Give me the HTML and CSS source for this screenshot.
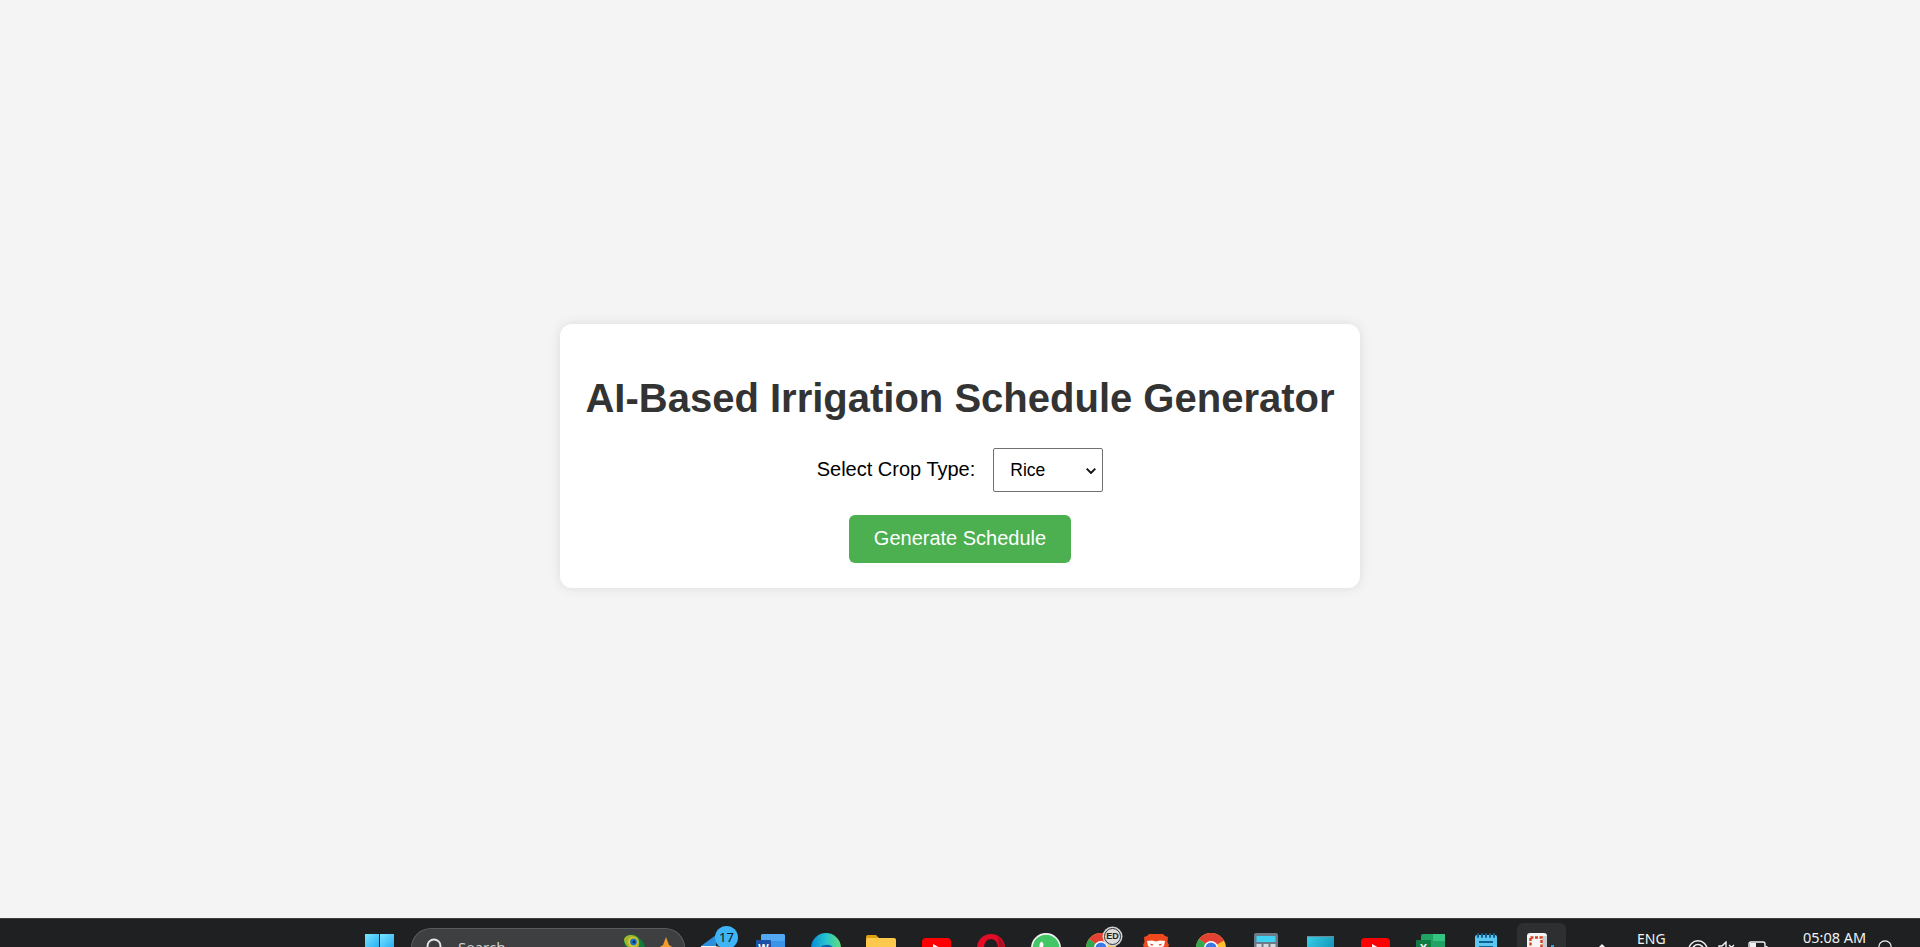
FILE: index.html
```html
<!DOCTYPE html>
<html lang="en">
<head>
<meta charset="utf-8">
<title>AI-Based Irrigation Schedule Generator</title>
<link rel="stylesheet" href="styles.css">
</head>
<body>
<main class="page">
  <section class="card">
    <h1 class="title">AI-Based Irrigation Schedule Generator</h1>
    <div class="field">
      <label class="field-label" for="crop">Select Crop Type:</label>
      <div class="select-wrap">
        <select class="field-select" id="crop"><option>Rice</option><option>Wheat</option><option>Corn</option></select>
        <svg class="select-chevron" viewBox="0 0 10 6"><path d="M.7.7L5 5l4.300-4.300" fill="none" stroke="#111" stroke-width="1.900"/></svg>
      </div>
    </div>
    <button class="generate" type="button"><span class="generate-label">Generate Schedule</span></button>
  </section>
</main>
<footer class="taskbar">
  <div class="tile tile-start">
    <svg class="ico" viewBox="0 0 30 30"><defs><linearGradient id="win" x1="0" y1="0" x2="1" y2="1"><stop offset="0" stop-color="#79e6ff"/><stop offset="1" stop-color="#27aef2"/></linearGradient></defs><rect x="0" y="1" width="14" height="14" fill="url(#win)"/><rect x="15" y="1" width="14" height="14" fill="url(#win)"/><rect x="0" y="16" width="14" height="14" fill="url(#win)"/><rect x="15" y="16" width="14" height="14" fill="url(#win)"/></svg>
  </div>
  <div class="search">
    <svg class="search-icon" viewBox="0 0 20 20"><circle cx="9" cy="8" r="6.500" fill="none" stroke="#e4e4e4" stroke-width="2"/><path d="M14 13l5 5" stroke="#e4e4e4" stroke-width="2"/></svg>
    <span class="search-text">Search</span>
    <svg class="peacock" viewBox="0 0 24 24"><path d="M1 5C3 0 11-1 15 3c5 4 8 9 7 15l-9 4C6 20 0 12 1 5z" fill="#0f7d3c"/><path d="M1 5C3 0 10 0 14 3c3 3 3 9 0 12-5 2-13-3-13-10z" fill="#a3b52c"/><circle cx="10" cy="8" r="4.800" fill="#e3cb2c"/><circle cx="10.500" cy="8" r="3.400" fill="#1672cc"/><circle cx="11" cy="8" r="1.400" fill="#0b2c5a"/></svg>
    <svg class="star" viewBox="0 0 16 20"><path d="M8 0l3 8 5 3-5 3-3 6-3-6-5-3 5-3z" fill="#f39a2d"/></svg>
  </div>
  <div class="apps">
    <div class="tile">
      <svg class="ico" viewBox="0 0 30 30"><path d="M0 13L15 2v11z" fill="#2a8fdc"/><path d="M0 13l14 0 15 3v12H0z" fill="#f1f1f1"/><path d="M3 14h20l-8 4z" fill="#b9d9f0"/></svg>
      <span class="badge-count">17</span>
    </div>
    <div class="tile">
      <svg class="ico" viewBox="0 0 30 30"><rect x="5" y="1" width="24" height="28" rx="2" fill="#3b94e8"/><rect x="5" y="1" width="24" height="7" rx="2" fill="#52a8f2"/><rect x="0" y="7" width="15" height="16" rx="1" fill="#1c4fa6"/><text class="mini-letter" x="7.500" y="19">W</text></svg>
    </div>
    <div class="tile">
      <svg class="ico" viewBox="0 0 30 30"><defs><linearGradient id="edge" x1="0" y1="0.500" x2="1" y2="0.500"><stop offset="0" stop-color="#0a8ad8"/><stop offset="0.500" stop-color="#25c4cf"/><stop offset="1" stop-color="#63dd78"/></linearGradient></defs><circle cx="15" cy="15" r="15" fill="url(#edge)"/><path d="M5 22c1-7 7-11 13-10 4 1 6 4 5 8z" fill="#0b62ae"/></svg>
    </div>
    <div class="tile">
      <svg class="ico" viewBox="0 0 30 30"><path d="M0 4a2 2 0 0 1 2-2h8l4 4h-14z" fill="#dfa10f"/><rect x="0" y="5" width="30" height="24" rx="2" fill="#fdc94d"/></svg>
    </div>
    <div class="tile">
      <svg class="ico" viewBox="0 0 30 30"><rect x="1" y="5" width="29" height="21" rx="4" fill="#f00"/><path d="M12 11l9 5-9 5z" fill="#fff"/></svg>
    </div>
    <div class="tile">
      <svg class="ico" viewBox="0 0 30 30"><path fill-rule="evenodd" d="M15 1a14 14 0 1 1 0 28 14 14 0 0 1 0-28zm0 5c-4 0-7 4-7 9s3 9 7 9 7-4 7-9-3-9-7-9z" fill="#e30d25"/><path d="M21 3a14 14 0 0 1 0 24c1.500-3 2-7 2-12s-.5-9-2-12z" fill="#a80f22"/></svg>
    </div>
    <div class="tile">
      <svg class="ico" viewBox="0 0 30 30"><circle cx="15" cy="15" r="15" fill="#f4f4f4"/><circle cx="15" cy="15" r="13.300" fill="#43c665"/><path d="M10 9c1.500-1 2.500 2 2.500 3s-1 1.500-.5 2.500 2 3 3.500 3.500 1.500-1 2.500-1 2.500 1.500 2.500 2.500c0 2-3 3-5.500 2S9 18 8.500 14c-.2-2 .3-4 1.500-5z" fill="#fff"/></svg>
    </div>
    <div class="tile">
      <svg class="ico" viewBox="0 0 30 30"><use href="#chrome-mark"/></svg>
      <span class="badge-ext">ED</span>
    </div>
    <div class="tile">
      <svg class="ico" viewBox="0 0 30 30"><path d="M8 1h14l2 2 3 1-.5 5 1.500 3-5 13-8 5-8-5-5-13 1.500-3L3 4l3-1z" fill="#f0481f"/><path d="M6 8l5-.5 4 1 4-1 5 .5-1 5-4 2-1 3h-6l-1-3-4-2z" fill="#fff"/><path d="M8.500 10.500l4 1-1.500 1.500zM21.500 10.500l-4 1 1.500 1.500z" fill="#f0481f"/></svg>
    </div>
    <div class="tile">
      <svg class="ico" viewBox="0 0 30 30"><defs><g id="chrome-mark"><circle cx="15" cy="15" r="15" fill="#fbc02d"/><path d="M15 15L3 6A15 15 0 0 1 28 7.500z" fill="#e34133"/><path d="M15 15L3 6A15 15 0 0 0 11 29.500z" fill="#2fa84f"/><circle cx="15" cy="15" r="7" fill="#fff"/><circle cx="15" cy="15" r="5.500" fill="#3b78e7"/></g></defs><use href="#chrome-mark"/></svg>
    </div>
    <div class="tile">
      <svg class="ico" viewBox="0 0 30 30"><rect x="3" y="0" width="24" height="30" rx="2" fill="#6d7b88"/><rect x="5.500" y="3" width="19" height="6" fill="#3fd2f2"/><rect x="5.500" y="11" width="5" height="5" fill="#d5d9dc"/><rect x="12.500" y="11" width="5" height="5" fill="#d5d9dc"/><rect x="19.500" y="11" width="5" height="5" fill="#d5d9dc"/></svg>
    </div>
    <div class="tile">
      <svg class="ico" viewBox="0 0 30 30"><defs><linearGradient id="teal" x1="0" y1="0" x2="1" y2="0.600"><stop offset="0" stop-color="#35cfe6"/><stop offset="1" stop-color="#1593b8"/></linearGradient></defs><rect x="1" y="3" width="27" height="24" fill="url(#teal)"/><rect x="1" y="3" width="27" height="1" fill="#6c8a96"/></svg>
    </div>
    <div class="tile">
      <svg class="ico" viewBox="0 0 30 30"><rect x="0" y="5" width="29" height="21" rx="4" fill="#f00"/><path d="M11 11l9 5-9 5z" fill="#fff"/></svg>
    </div>
    <div class="tile">
      <svg class="ico" viewBox="0 0 30 30"><rect x="5" y="1" width="24" height="28" rx="2" fill="#21a366"/><rect x="17" y="1" width="12" height="7" fill="#33c481"/><rect x="17" y="8" width="12" height="7" fill="#21a366"/><rect x="0" y="7" width="15" height="16" rx="1" fill="#107c41"/><text class="mini-letter" x="7.500" y="19">X</text></svg>
    </div>
    <div class="tile">
      <svg class="ico" viewBox="0 0 30 30"><rect x="4" y="2" width="22" height="27" rx="2" fill="#5cc8f2"/><path d="M7 1v3M11 1v3M15 1v3M19 1v3M23 1v3" stroke="#13608f" stroke-width="2" stroke-linecap="round"/><path d="M8 9h14M8 14h14" stroke="#125f92" stroke-width="2"/></svg>
    </div>
    <div class="tile tile-active">
      <svg class="ico" viewBox="0 0 30 30"><rect x="1" y="0" width="20" height="28" rx="3" fill="#f5f5f5"/><path d="M16 3h5v22h-5z" fill="#c9ced2"/><rect x="4.500" y="4.500" width="11" height="11" fill="none" stroke="#d8401c" stroke-width="2.400" stroke-dasharray="3 1.500"/><rect x="25" y="12" width="3" height="5" fill="#2aa7d8"/></svg>
    </div>
  </div>
  <div class="tray">
    <svg class="caret" viewBox="0 0 12 8"><path d="M1 7l5-5 5 5" fill="none" stroke="#f0f0f0" stroke-width="1.500"/></svg>
    <span class="lang">ENG</span>
    <svg class="wifi" viewBox="0 0 20 20"><g fill="none" stroke="#f0f0f0" stroke-width="1.500"><circle cx="10" cy="10" r="9.200"/><circle cx="10" cy="10" r="5.500"/><circle cx="10" cy="10" r="2"/></g></svg>
    <svg class="speaker" viewBox="0 0 18 14"><path d="M1 5h3l4-4v12l-4-4H1z" fill="none" stroke="#f0f0f0" stroke-width="1.400"/><path d="M11 4l5 5M16 4l-5 5" stroke="#f0f0f0" stroke-width="1.400"/></svg>
    <svg class="battery" viewBox="0 0 20 14"><rect x="1" y="1" width="16" height="12" rx="2" fill="none" stroke="#f0f0f0" stroke-width="1.400"/><rect x="2" y="2" width="6" height="10" fill="#f0f0f0"/><rect x="17.500" y="5" width="2" height="4" fill="#f0f0f0"/></svg>
    <span class="clock">05:08 AM</span>
    <svg class="bell" viewBox="0 0 14 14"><circle cx="7" cy="7" r="6.200" fill="none" stroke="#f0f0f0" stroke-width="1.300"/></svg>
  </div>
</footer>
</body>
</html>
```
FILE: styles.css
```css
* {
  box-sizing: border-box;
}

html,
body {
  height: 100%;
}

body {
  margin: 0;
  display: flex;
  flex-direction: column;
  overflow: hidden;
  background: #f4f4f4;
  font-family: "Liberation Sans", Arial, sans-serif;
}

.page {
  flex: 1;
  min-height: 0;
  display: flex;
  align-items: center;
  justify-content: center;
  padding-bottom: 6px;
}

.card {
  width: 800px;
  height: 264px;
  padding: 25px 0;
  display: flex;
  flex-direction: column;
  align-items: center;
  background: #fff;
  border-radius: 12px;
  box-shadow: 0 0 12px rgba(0, 0, 0, 0.1);
}

.title {
  margin: 26px 0 27px;
  font-size: 40px;
  line-height: 46px;
  font-weight: 700;
  color: #333;
  white-space: nowrap;
}

.field {
  display: flex;
  align-items: center;
  gap: 18px;
  height: 44px;
}

.field-label {
  padding-bottom: 2px;
  font-size: 20px;
  color: #000;
}

.select-wrap {
  position: relative;
  width: 110px;
  height: 44px;
}

.field-select {
  display: block;
  width: 110px;
  height: 44px;
  padding: 0 16px;
  appearance: none;
  font-family: inherit;
  font-size: 17.500px;
  color: #000;
  background: #fff;
  border: 1px solid #707070;
  border-radius: 2px;
}

.select-chevron {
  position: absolute;
  right: 7px;
  top: 20px;
  width: 10px;
  height: 6px;
  pointer-events: none;
}

.generate {
  margin-top: 23px;
  width: 222px;
  height: 48px;
  padding: 0 0 2px;
  font-family: inherit;
  font-size: 20px;
  color: #fff;
  background: #4caf50;
  border: 0;
  border-radius: 6px;
}

.taskbar {
  flex: none;
  height: 29px;
  overflow: hidden;
  display: flex;
  align-items: flex-start;
  padding-left: 352px;
  background: #1e2022;
  border-top: 1px solid #3d3e40;
  font-family: "Noto Sans", "Open Sans", sans-serif;
  color: #f2f2f2;
}

.tile {
  position: relative;
  flex: none;
  width: 55px;
  height: 50px;
  padding: 14px 12px 0 13px;
}

.apps .tile {
  padding: 14px 13px 0 12px;
}

.ico {
  display: block;
  width: 30px;
  height: 30px;
}

.search {
  flex: none;
  width: 274px;
  height: 40px;
  margin: 9px 4px 0 4px;
  padding-left: 13px;
  display: flex;
  align-items: flex-start;
  background: #3e3f41;
  border: 1px solid #5a5b5d;
  border-bottom: 0;
  border-radius: 20px;
}

.search-icon {
  flex: none;
  width: 20px;
  height: 20px;
  margin-top: 9px;
}

.search-text {
  margin: 8px 0 0 13px;
  width: 165px;
  font-size: 15px;
  line-height: 20px;
  color: #cfcfcf;
}

.peacock {
  flex: none;
  width: 24px;
  height: 24px;
  margin-top: 5px;
}

.star {
  flex: none;
  width: 16px;
  height: 20px;
  margin: 8px 0 0 11px;
}

.apps {
  flex: none;
  display: flex;
}

.tile-active::before {
  content: "";
  position: absolute;
  left: 3px;
  top: 4px;
  right: 3px;
  height: 40px;
  background: #2e2f31;
  border-radius: 6px;
}

.tile-active .ico {
  position: relative;
}

.mini-letter {
  font-family: "Liberation Sans", Arial, sans-serif;
  font-size: 11px;
  font-weight: 700;
  fill: #fff;
  text-anchor: middle;
}

.badge-count {
  position: absolute;
  left: 26px;
  top: 7px;
  width: 23px;
  height: 23px;
  border-radius: 50%;
  background: #3fb4f6;
  color: #101820;
  font-size: 13px;
  line-height: 23px;
  text-align: center;
}

.badge-ext {
  position: absolute;
  left: 30px;
  top: 9px;
  width: 17px;
  height: 17px;
  border-radius: 50%;
  background: #dcdcdc;
  border: 1.500px solid #333;
  box-shadow: 0 0 0 1.500px #d5d5d5;
  color: #222;
  font-family: "Liberation Sans", Arial, sans-serif;
  font-size: 9px;
  font-weight: 700;
  line-height: 14px;
  text-align: center;
}

.tray {
  flex: none;
  display: flex;
  align-items: flex-start;
}

.caret {
  flex: none;
  width: 12px;
  height: 8px;
  margin: 24px 0 0 27px;
}

.lang {
  flex: none;
  width: 40px;
  margin: 10px 0 0 29px;
  font-size: 14px;
  line-height: 19px;
}

.wifi {
  flex: none;
  width: 20px;
  height: 20px;
  margin: 21px 0 0 11px;
}

.speaker {
  flex: none;
  width: 18px;
  height: 14px;
  margin: 22px 0 0 10px;
}

.battery {
  flex: none;
  width: 20px;
  height: 14px;
  margin: 22px 0 0 12px;
}

.clock {
  flex: none;
  width: 70px;
  margin: 9px 0 0 35px;
  font-size: 14.500px;
  line-height: 19px;
  white-space: nowrap;
}

.bell {
  flex: none;
  width: 14px;
  height: 14px;
  margin: 21px 0 0 5px;
}
```
